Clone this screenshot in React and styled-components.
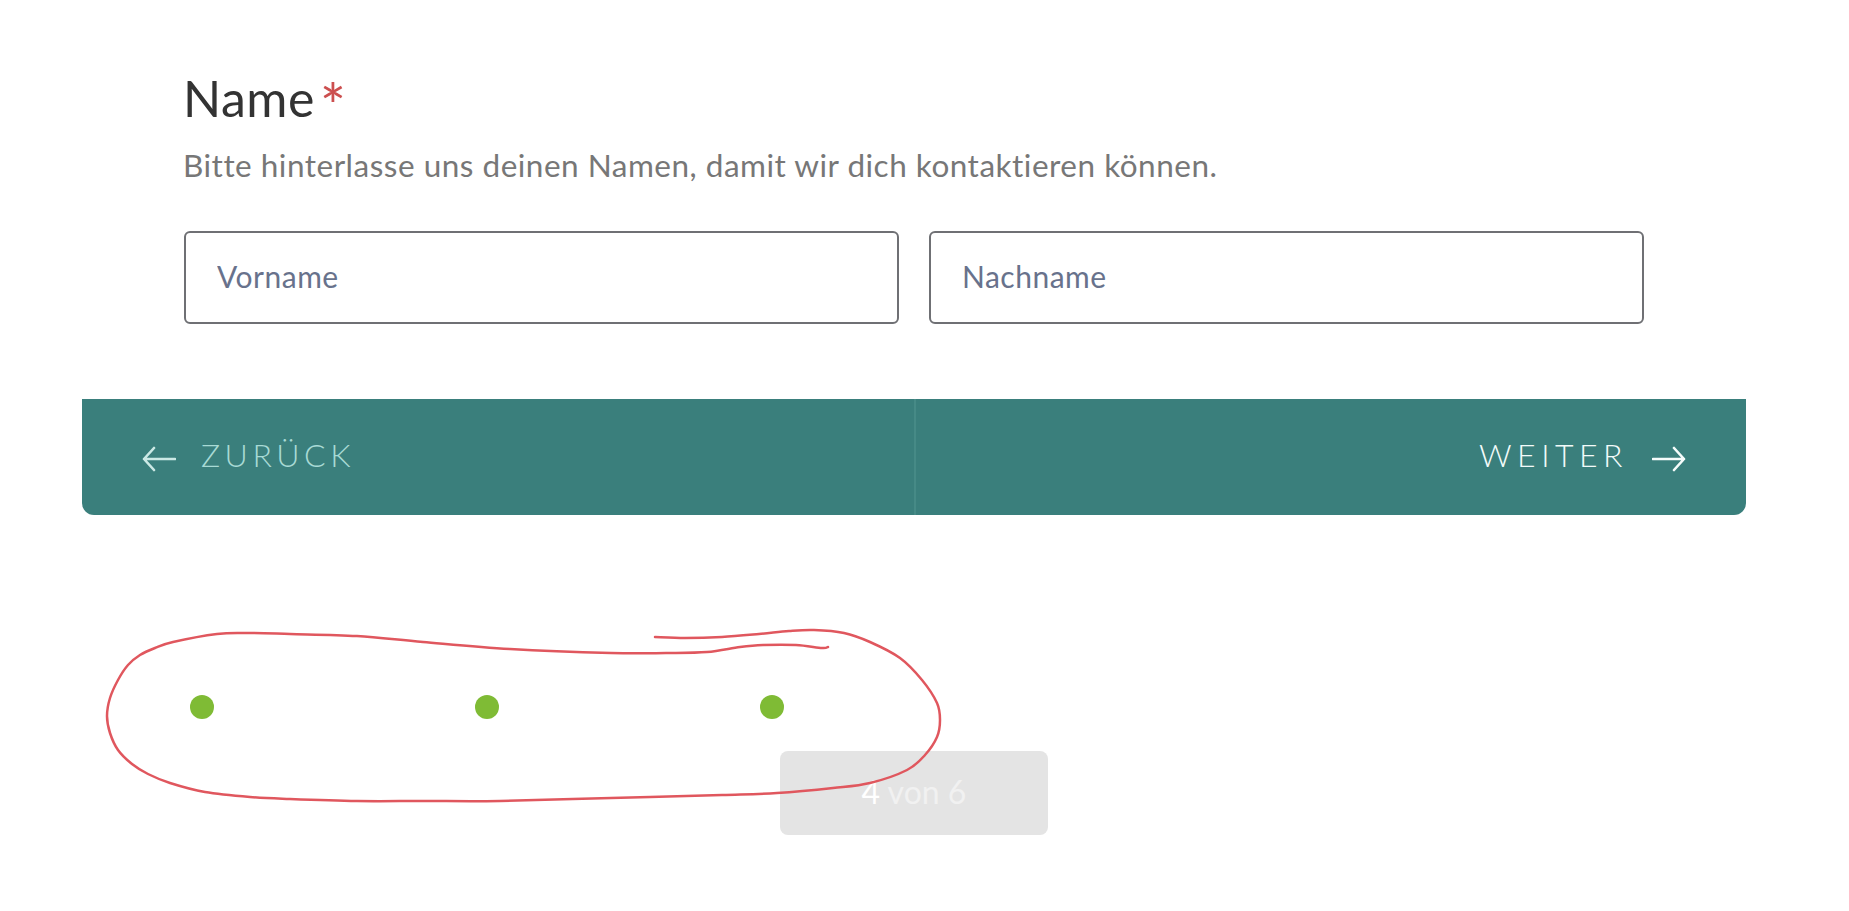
import styled, { createGlobalStyle } from "styled-components";

const GlobalStyle = createGlobalStyle`
	html, body {
		margin: 0;
		background: #fff;
		font-family: "Lato", "Noto Sans", sans-serif;
	}
`;

const Page = styled.div`
	position: relative;
	width: 1849px;
	height: 911px;
	overflow: hidden;
	box-sizing: border-box;
	padding: 0 103px 0 82px;
`;

const Form = styled.div`
	padding: 68px 102px 0;
`;

const Title = styled.h2`
	margin: 0 0 0 -1px;
	font-size: 50px;
	line-height: 60px;
	font-weight: 400;
	letter-spacing: 0.5px;
	color: #333;
`;

const Star = styled.span`
	margin-left: 5px;
	font-size: 62px;
	line-height: 0;
	vertical-align: -12px;
	color: #cc4f4f;
`;

const Hint = styled.p`
	margin: 17px 0 0 -1px;
	font-size: 31.5px;
	line-height: 40px;
	letter-spacing: 0.5px;
	color: #777;
`;

const Fields = styled.div`
	display: grid;
	grid-template-columns: 1fr 1fr;
	gap: 30px;
	margin-top: 46px;
`;

const Field = styled.input`
	box-sizing: border-box;
	width: 100%;
	height: 93px;
	padding: 0 31px 4px;
	border: 2px solid #6f7074;
	border-radius: 6px;
	background: #fff;
	font-family: inherit;
	font-size: 30px;
	letter-spacing: 0.5px;
	outline: none;
	&::placeholder {
		color: #68728c;
		opacity: 1;
	}
`;

const Nav = styled.div`
	display: grid;
	grid-template-columns: 832px 1fr;
	height: 116px;
	margin-top: 75px;
	border-radius: 0 0 12px 12px;
	background: #3a7f7c;
	overflow: hidden;
`;

const NavButton = styled.button`
	display: flex;
	align-items: center;
	justify-content: ${props => (props.$next ? "flex-end" : "flex-start")};
	gap: ${props => (props.$next ? "24px" : "25px")};
	padding: 0 60px 5px;
	border: 0;
	border-left: ${props => (props.$next ? "2px solid #468a86" : "0")};
	background: transparent;
	color: ${props => (props.$next ? "#f2fbfa" : "#a8dad5")};
	font-family: inherit;
	font-size: 32px;
	font-weight: 300;
	letter-spacing: ${props => (props.$next ? "5.5px" : "4.5px")};
	cursor: pointer;
`;

const Arrow = styled.svg`
	flex: none;
	width: 34px;
	height: 26px;
	margin-top: 9px;
	fill: none;
	stroke: ${props => props.$color};
	stroke-width: 2.6;
	stroke-linecap: round;
	stroke-linejoin: round;
`;

const Footer = styled.div`
	display: flex;
	flex-direction: column;
`;

const Dots = styled.div`
	display: flex;
	gap: 261px;
	margin: 180px 0 0 108px;
`;

const Dot = styled.span`
	width: 24px;
	height: 24px;
	border-radius: 50%;
	background: #7fbb35;
`;

const Counter = styled.div`
	align-self: center;
	display: flex;
	align-items: center;
	justify-content: center;
	box-sizing: border-box;
	width: 268px;
	height: 84px;
	margin-top: 32px;
	padding-bottom: 4px;
	border-radius: 8px;
	background: #e4e4e4;
	color: #f1f1f1;
	font-size: 32px;
	b {
		font-weight: 400;
		color: #fff;
	}
`;

const Scribble = styled.svg`
	position: absolute;
	top: 0;
	left: 0;
	width: 1849px;
	height: 911px;
	pointer-events: none;
	fill: none;
	stroke: #e0575e;
	stroke-width: 2.5;
	stroke-linecap: round;
	stroke-linejoin: round;
`;

// the hand drawn loop, read off the screenshot
const LOOP = [
	[828, 647], [822, 648], [796, 645], [763, 645], [740, 647], [707, 652], [666, 653], [611, 653],
	[510, 649], [423, 642], [357, 636], [290, 634], [247, 633], [217, 634], [173, 642], [155, 648],
	[140, 655], [128, 665], [118, 680], [110, 698], [107, 716], [110, 733], [118, 750], [132, 764],
	[148, 774], [170, 783], [205, 792], [250, 797], [290, 799], [357, 801], [423, 801], [500, 801], [611, 798],
	[722, 795], [777, 793], [833, 788], [870, 783], [907, 770], [925, 755], [937, 737], [940, 720],
	[937, 703], [922, 680], [900, 658], [870, 642], [844, 633], [814, 630], [789, 631], [759, 634],
	[722, 637], [685, 638], [655, 637],
];

function smoothPath(points) {
	let d = `M${points[0][0]} ${points[0][1]}`;
	for (let i = 0; i < points.length - 1; i++) {
		const p0 = points[i - 1] || points[i];
		const p1 = points[i];
		const p2 = points[i + 1];
		const p3 = points[i + 2] || p2;
		const c1x = p1[0] + (p2[0] - p0[0]) / 6;
		const c1y = p1[1] + (p2[1] - p0[1]) / 6;
		const c2x = p2[0] - (p3[0] - p1[0]) / 6;
		const c2y = p2[1] - (p3[1] - p1[1]) / 6;
		d += ` C${c1x} ${c1y} ${c2x} ${c2y} ${p2[0]} ${p2[1]}`;
	}
	return d;
}

export default function App() {
	return <>
		<GlobalStyle />
		<Page>
			<Form>
				<Title>Name<Star>*</Star></Title>
				<Hint>Bitte hinterlasse uns deinen Namen, damit wir dich kontaktieren können.</Hint>
				<Fields>
					<Field placeholder="Vorname" />
					<Field placeholder="Nachname" />
				</Fields>
			</Form>
			<Nav>
				<NavButton>
					<Arrow $color="#cbe9e5" viewBox="0 0 34 26">
						<path d="M33 13H2M12 2L2 13l10 11" />
					</Arrow>
					ZURÜCK
				</NavButton>
				<NavButton $next>
					WEITER
					<Arrow $color="#f5fcfb" viewBox="0 0 34 26">
						<path d="M1 13h31M22 2l10 11-10 11" />
					</Arrow>
				</NavButton>
			</Nav>
			<Footer>
				<Dots>
					<Dot />
					<Dot />
					<Dot />
				</Dots>
				<Counter><span><b>4</b> von 6</span></Counter>
			</Footer>
			<Scribble viewBox="0 0 1849 911">
				<path d={smoothPath(LOOP)} />
			</Scribble>
		</Page>
	</>;
}
